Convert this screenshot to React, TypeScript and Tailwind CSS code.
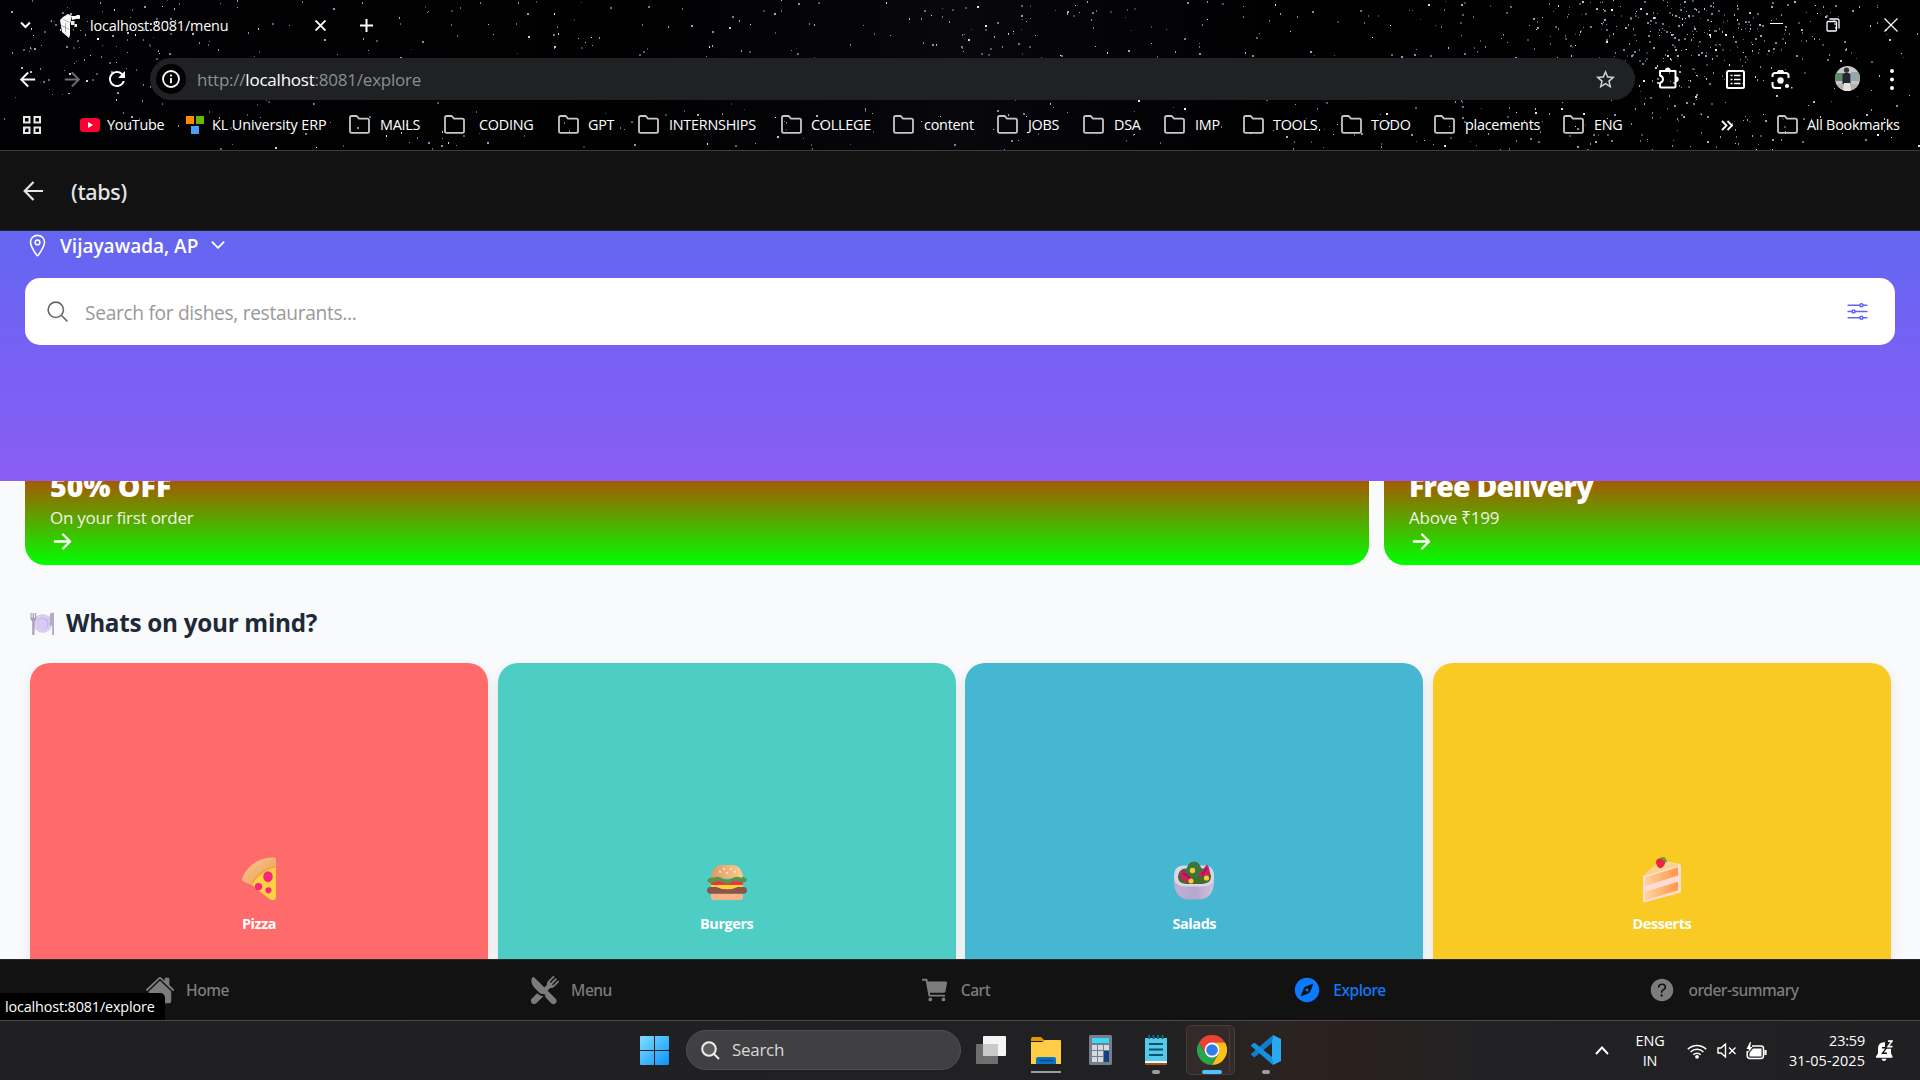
import React from "react";
import {
  IoArrowForward,
  IoCart,
  IoChevronDown,
  IoCompass,
  IoHelpCircle,
  IoHome,
  IoLocationOutline,
  IoOptionsOutline,
  IoRestaurant,
  IoSearchOutline,
} from "react-icons/io5";
import { MdArrowBack, MdArrowForward, MdRefresh, MdOutlineStarBorder } from "react-icons/md";

/* ---------- Star field behind the browser chrome ---------- */

function makeStars() {
  let s = 1234567;
  const rnd = () => {
    s = (s + 0x6d2b79f5) | 0;
    let t = Math.imul(s ^ (s >>> 15), 1 | s);
    t = (t + Math.imul(t ^ (t >>> 7), 61 | t)) ^ t;
    return ((t ^ (t >>> 14)) >>> 0) / 4294967296;
  };
  const gauss = () => (rnd() + rnd() + rnd() + rnd() - 2) / 2;
  const out: { x: number; y: number; w: number; h: number; c: string; o: number }[] = [];
  const colors = ["#8aa8dd", "#a9c4ee", "#dfe8f5", "#ffffff", "#7f99cf"];
  const add = (x: number, y: number) => {
    const big = rnd() > 0.68;
    out.push({
      x: Math.round(x),
      y: Math.round(y),
      w: big ? 2 : 1,
      h: big || rnd() > 0.5 ? 2 : 1,
      c: colors[Math.floor(rnd() * colors.length)],
      o: 0.35 + rnd() * 0.65,
    });
  };
  for (let i = 0; i < 620; i++) add(rnd() * 1920, rnd() * 150);
  for (let i = 0; i < 260; i++) add(1690 + gauss() * 260, 30 + gauss() * 90);
  for (let i = 0; i < 200; i++) add(1610 + gauss() * 420, rnd() * 150);
  for (let i = 0; i < 70; i++) add(120 + gauss() * 160, 40 + gauss() * 90);
  for (let i = 0; i < 50; i++) add(990 + gauss() * 130, 45 + gauss() * 80);
  return out;
}
const stars = makeStars();

function StarField() {
  return (
    <svg className="absolute inset-0 h-[150px] w-[1920px]" viewBox="0 0 1920 150" shapeRendering="crispEdges">
      {stars.map((p, i) => (
        <rect key={i} x={p.x} y={p.y} width={p.w} height={p.h} fill={p.c} opacity={p.o} />
      ))}
    </svg>
  );
}

/* ---------- Browser icons ---------- */

function Folder() {
  return (
    <svg className="h-[19px] w-[21px] shrink-0" viewBox="0 0 21 19" fill="none" stroke="#c7c7c7" strokeWidth="1.8">
      <path d="M1 2.6Q1 1 2.6 1H7.6L10 3.6H18.4Q20 3.6 20 5.2V16.2Q20 17.8 18.4 17.8H2.6Q1 17.8 1 16.2Z" />
    </svg>
  );
}

function CubeIcon() {
  return (
    <svg className="h-[25px] w-[21px]" viewBox="0 0 21 25">
      <path d="M0 7 3 4 8 1l4 2-1 4-1 4v11l-1 3-7-6Z" fill="#fafafa" />
      <path d="M1 12l8 4.500M3 6l6 3.500M5.500 10v9" stroke="#666" strokeWidth=".5" />
      <path d="M12 3h4v3l-4 1Z" fill="#fff" />
      <rect x="16" y="2" width="4" height="4" rx="1" fill="#fff" />
      <rect x="11" y="8" width="3.500" height="4" fill="#eee" />
      <rect x="14.500" y="11" width="2.500" height="3" fill="#eee" />
    </svg>
  );
}

function Puzzle() {
  return (
    <svg className="h-[26px] w-[22px]" viewBox="0 0 22 26" fill="none">
      <path
        d="M2 6H17.500V21.500Q17.500 22.500 16.500 22.500H3Q2 22.500 2 21.500V18Q5 17 5 14.200Q5 11.400 2 10.500V6Z"
        stroke="#fff"
        strokeWidth="2"
        strokeLinejoin="round"
      />
      <path d="M7 5.500a2.800 3 0 0 1 5.600 0ZM18 11.400a2.800 2.800 0 0 1 0 5.600Z" fill="#fff" />
    </svg>
  );
}

function ListIcon() {
  return (
    <svg className="h-[19px] w-[19px]" viewBox="0 0 19 19" fill="none" stroke="#fff">
      <rect x="1" y="1" width="17" height="17" rx="1.500" strokeWidth="2" />
      <path d="M4.500 5.500h2M4.500 9.500h2M4.500 13.500h2M8 5.500h6.500M8 9.500h6.500M8 13.500h6.500" strokeWidth="1.700" />
    </svg>
  );
}

function LensIcon() {
  return (
    <svg className="h-[22px] w-[22px]" viewBox="0 0 22 22" fill="none" stroke="#fff" strokeWidth="2">
      <path d="M1.500 9V7.500Q1.500 5 4 5H15Q17.500 5 17.500 7.500V10M1.500 14V17Q1.500 20 4.500 20H10" />
      <path d="M5.500 4.500 7.200 2H11.800L13.500 4.500Z" fill="#fff" stroke="none" />
      <circle cx="9.500" cy="12.500" r="3.200" fill="#fff" stroke="none" />
      <circle cx="16" cy="18" r="2.100" fill="#fff" stroke="none" />
      <rect x="20" y="19" width="1.500" height="1.500" fill="#ccc" stroke="none" />
    </svg>
  );
}

function Avatar() {
  return (
    <svg className="h-[25px] w-[25px]" viewBox="0 0 25 25">
      <clipPath id="av">
        <circle cx="12.500" cy="12.500" r="12.500" />
      </clipPath>
      <g clipPath="url(#av)">
        <rect width="25" height="25" fill="#c3c8c9" />
        <rect y="7" width="8" height="8" fill="#5d8a67" />
        <rect x="16" y="6" width="9" height="9" fill="#98a5aa" />
        <rect y="18" width="25" height="7" fill="#b9b3ac" />
        <circle cx="11.500" cy="4" r="2.600" fill="#3c302c" />
        <path d="M7.500 8q4-3 8 0v10h-8Z" fill="#22262f" />
        <path d="M9 17h6l1 8H8Z" fill="#e4e2df" />
      </g>
    </svg>
  );
}

/* ---------- Browser chrome ---------- */

function TabStrip() {
  return (
    <div className="flex h-[50px] items-center">
      <svg className="ml-[20px] h-[8px] w-[11px]" viewBox="0 0 11 8" fill="none" stroke="#fff" strokeWidth="2">
        <path d="M1 1.500 5.500 6 10 1.500" />
      </svg>
      <div className="ml-[29px]">
        <CubeIcon />
      </div>
      <span className="mt-[1px] ml-[9px] w-[225px] text-[14.4px] tracking-[-0.15px] text-white">localhost:8081/menu</span>
      <svg className="h-[11px] w-[11px]" viewBox="0 0 11 11" stroke="#fff" strokeWidth="1.900">
        <path d="M.5.5l10 10M10.500.5l-10 10" />
      </svg>
      <svg className="ml-[34px] h-[13px] w-[13px]" viewBox="0 0 13 13" stroke="#fff" strokeWidth="2">
        <path d="M6.500 0v13M0 6.500h13" />
      </svg>
      <svg className="mb-[2px] ml-auto h-[2px] w-[13px]" viewBox="0 0 13 2">
        <rect width="13" height="1" fill="#fff" />
      </svg>
      <svg className="ml-[43px] h-[14px] w-[14px]" viewBox="0 0 14 14" fill="none" stroke="#fff">
        <rect x="1" y="3.500" width="9.500" height="9.500" rx="1" strokeWidth="1.300" />
        <path d="M3.500 1h8q1.500 0 1.500 1.500v8" strokeWidth="1.300" />
      </svg>
      <svg className="mr-[22px] ml-[44px] h-[14px] w-[14px]" viewBox="0 0 14 14" stroke="#fff" strokeWidth="1.200">
        <path d="M.5.5l13 13M13.500.5l-13 13" />
      </svg>
    </div>
  );
}

function Toolbar() {
  return (
    <div className="flex h-[58px] items-center">
      <MdArrowBack className="ml-[16px] h-[23px] w-[23px] text-white" />
      <MdArrowForward className="ml-[22px] h-[23px] w-[23px] text-[#6e6e6e]" />
      <MdRefresh className="mb-[1px] ml-[21px] h-[24px] w-[24px] text-white" />
      <div className="ml-[21px] flex h-[42px] w-[1485px] items-center rounded-full bg-[#202124]">
        <div className="ml-[6px] flex h-[30px] w-[30px] items-center justify-center rounded-full bg-black">
          <svg className="h-[18px] w-[18px]" viewBox="0 0 18 18" fill="none" stroke="#fff" strokeWidth="1.800">
            <circle cx="9" cy="9" r="8" />
            <path d="M9 8v5.200M9 4.500v2" />
          </svg>
        </div>
        <span className="mt-[1px] ml-[11px] text-[17px] tracking-[-0.22px] whitespace-nowrap text-[#8b8e93]">
          http://<span className="text-white">localhost</span>:8081/explore
        </span>
        <MdOutlineStarBorder className="mr-[18px] ml-auto h-[23px] w-[23px] text-[#d0d0d0]" />
      </div>
      <div className="mb-[2px] ml-[23px]">
        <Puzzle />
      </div>
      <div className="ml-[46px]">
        <ListIcon />
      </div>
      <div className="mb-[1px] ml-[26px]">
        <LensIcon />
      </div>
      <div className="mb-[1px] ml-[42px]">
        <Avatar />
      </div>
      <svg className="ml-[30px] h-[21px] w-[4px]" viewBox="0 0 4 21" fill="#fff">
        <circle cx="2" cy="2" r="2" />
        <circle cx="2" cy="10.500" r="2" />
        <circle cx="2" cy="19" r="2" />
      </svg>
    </div>
  );
}

const folders = [
  { t: "MAILS", w: "w-[95px]", g: "ml-[10px]" },
  { t: "CODING", w: "w-[114px]", g: "ml-[14px]" },
  { t: "GPT", w: "w-[80px]", g: "ml-[9px]" },
  { t: "INTERNSHIPS", w: "w-[143px]", g: "ml-[10px]" },
  { t: "COLLEGE", w: "w-[112px]", g: "ml-[9px]" },
  { t: "content", w: "w-[104px]", g: "ml-[10px]" },
  { t: "JOBS", w: "w-[86px]", g: "ml-[10px]" },
  { t: "DSA", w: "w-[81px]", g: "ml-[10px]" },
  { t: "IMP", w: "w-[79px]", g: "ml-[10px]" },
  { t: "TOOLS", w: "w-[98px]", g: "ml-[9px]" },
  { t: "TODO", w: "w-[93px]", g: "ml-[9px]" },
  { t: "placements", w: "w-[129px]", g: "ml-[10px]" },
  { t: "ENG", w: "w-[158px]", g: "ml-[10px]" },
];

function Bookmarks() {
  return (
    <div className="flex h-[34px] items-center text-[14.4px] tracking-[-0.25px] whitespace-nowrap text-white">
      <svg className="ml-[23px] h-[18px] w-[18px] shrink-0" viewBox="0 0 18 18" fill="none" stroke="#e8e8e8" strokeWidth="2">
        <rect x="1" y="1" width="5.500" height="5.500" />
        <rect x="11.500" y="1" width="5.500" height="5.500" />
        <rect x="1" y="11.500" width="5.500" height="5.500" />
        <rect x="11.500" y="11.500" width="5.500" height="5.500" />
      </svg>
      <svg className="ml-[39px] h-[14px] w-[20px] shrink-0" viewBox="0 0 20 14">
        <rect width="20" height="14" rx="3.500" fill="#f03" />
        <path d="M8 4v6l5-3Z" fill="#fff" />
      </svg>
      <span className="ml-[7px] w-[79px]">YouTube</span>
      <svg className="h-[18px] w-[18px] shrink-0" viewBox="0 0 18 18">
        <rect width="8" height="8" fill="#ff8c00" />
        <rect x="10" width="8" height="8" fill="#6bb700" />
        <rect x="5" y="10" width="8" height="8" fill="#4a9df8" />
      </svg>
      <span className="ml-[8px] w-[137px] tracking-[-0.1px]">KL University ERP</span>
      {folders.map((f) => (
        <div key={f.t} className={`flex shrink-0 items-center ${f.w}`}>
          <Folder />
          <span className={f.g}>{f.t}</span>
        </div>
      ))}
      <svg className="h-[11px] w-[12px] shrink-0" viewBox="0 0 12 11" fill="none" stroke="#fff" strokeWidth="1.800">
        <path d="M1 1l4.500 4.500L1 10M6.500 1 11 5.500 6.500 10" />
      </svg>
      <div className="ml-[44px] flex items-center">
        <Folder />
        <span className="ml-[9px]">All Bookmarks</span>
      </div>
    </div>
  );
}

/* ---------- Food pictures ---------- */

function Pizza() {
  return (
    <svg className="h-[46px] w-[36px]" viewBox="0 0 38 48">
      <defs>
        <linearGradient id="crust" x1="0" y1="0" x2="1" y2="1">
          <stop offset="0" stopColor="#ffc98b" />
          <stop offset="1" stopColor="#e89a5e" />
        </linearGradient>
      </defs>
      <path d="M6 26 37 8V42Q37 48 31 46Z" fill="#ffd03f" />
      <path d="M34 1Q37 1 37 4V11Q20 13 10 30L3 27Q0 25 2 21Q12 2 34 1Z" fill="url(#crust)" />
      <path d="M36 11Q21 14 11 29" stroke="#f0a23c" strokeWidth="1.500" fill="none" />
      <ellipse cx="28.500" cy="21.500" rx="5" ry="5.800" fill="#f5277e" />
      <circle cx="18.500" cy="32" r="3.900" fill="#f5277e" />
      <circle cx="29" cy="36" r="3.200" fill="#f5277e" />
    </svg>
  );
}

function Burger() {
  return (
    <svg className="mt-[7px] h-[37px] w-[40px]" viewBox="0 0 40 38" preserveAspectRatio="none">
      <defs>
        <linearGradient id="bun" x1="0" y1="0" x2="1" y2="0">
          <stop offset="0" stopColor="#d99a62" />
          <stop offset="1" stopColor="#ffcb94" />
        </linearGradient>
      </defs>
      <path d="M4 30H36V34Q36 37 33 37H7Q4 37 4 34Z" fill="#fbb488" />
      <path d="M4 15Q5 1 15 1H25Q35 1 36 15Z" fill="url(#bun)" />
      <path d="M4 17H36V23H4Z" fill="#ec2f55" />
      <path d="M4 21.500H36V26H4Z" fill="#ffd22e" />
      <rect y="23.500" width="40" height="7" rx="3.500" fill="#875650" />
      <path d="M8 23Q20 29 32 23Z" fill="#ffd22e" />
      <path d="M0 17Q2 13 7 14Q11 12 14 14Q20 18 26 14Q30 12 34 14Q38 12 40 16Q39 21 32 18Q27 16 24 19Q20 22 16 19Q12 16 7 19Q2 21 0 17Z" fill="#559746" />
      <g fill="#fff3dc">
        <circle cx="13" cy="8" r="1" />
        <circle cx="17" cy="5" r="1" />
        <circle cx="20" cy="9" r="1" />
        <circle cx="24" cy="5" r="1" />
        <circle cx="28" cy="8" r="1" />
      </g>
    </svg>
  );
}

function Salad() {
  return (
    <svg className="mt-[3px] h-[45px] w-[40px]" viewBox="0 0 40 40">
      <defs>
        <linearGradient id="bowl" x1="0" y1="0" x2="1" y2="0">
          <stop offset="0" stopColor="#bdb3cd" />
          <stop offset=".55" stopColor="#b7a6cf" />
          <stop offset="1" stopColor="#cfc4dd" />
        </linearGradient>
      </defs>
      <path d="M0 15H40V22Q39 39 24 39H16Q1 39 0 22Z" fill="url(#bowl)" />
      <path d="M0 16Q0 5 10 5H30Q40 5 40 16Q40 26 28 26H12Q0 26 0 16Z" fill="#dcd5e6" />
      <path d="M4 16Q5 8 12 8H29Q37 9 37 16Q37 23 28 23.500H12Q4 23 4 16Z" fill="#436c2b" />
      <path d="M12 12Q13 1 20 1Q27 1 28 12Q27 17 20 16Q13 17 12 12Z" fill="#39753f" />
      <path d="M6 11Q14 10 19 20Q12 23 8 19Q5 15 6 11Z" fill="#ce1e64" />
      <path d="M33 4Q37 9 35 15Q30 17 24 15Z" fill="#ce1e64" />
      <path d="M9 13q5 1 7 6M33 8l-5 6" stroke="#8b1748" strokeWidth="1.500" fill="none" />
      <circle cx="18.500" cy="10" r="2.700" fill="#ffc82e" />
      <circle cx="32.500" cy="17.500" r="2.600" fill="#ffc82e" />
      <circle cx="17" cy="20.500" r="2.500" fill="#ffc82e" />
    </svg>
  );
}

function Cake() {
  return (
    <svg className="h-[47px] w-[40px]" viewBox="0 0 40 42" preserveAspectRatio="none">
      <defs>
        <linearGradient id="sponge" x1="0" y1="0" x2="1" y2="0">
          <stop offset="0" stopColor="#ffd3a0" />
          <stop offset="1" stopColor="#ff9846" />
        </linearGradient>
      </defs>
      <path d="M1 18 18 4 37 7Q39 7.500 39 9V31Q39 32.500 37 33L2 41.500Q1 41.500 1 40Z" fill="#ffdcd5" />
      <path d="M1 18 18 4 38 8Z" fill="#fbd28d" />
      <path d="M3 19 36 10V17.500L3 27Z" fill="url(#sponge)" />
      <path d="M3 32 36 23V30.500L3 39.500Z" fill="url(#sponge)" />
      <path d="M14 6Q14 2 19 2Q24 3 23 7Q21 11 18 11Q15 10 14 6Z" fill="#e8243f" />
      <path d="M18 1.500Q24-1 25 6Q22 5 18 1.500Z" fill="#5f9d35" />
    </svg>
  );
}

function Plate() {
  return (
    <svg className="mt-[2px] h-[24px] w-[25px]" viewBox="0 0 25 25">
      <circle cx="12.800" cy="12" r="9.600" fill="#cdbde8" />
      <circle cx="12.800" cy="12" r="9" fill="#dccff3" />
      <circle cx="12.800" cy="12" r="6.200" fill="#c6b4e4" />
      <circle cx="12" cy="12.500" r="5.400" fill="#d8cbf1" />
      <path d="M0 1h1.200v5h1V1h1.500v5h1V1H6v6q0 2-1.800 2.500V24H1.800V9.500Q0 9 0 7Z" fill="#aaa0ba" />
      <path d="M20 4q0-3 2.500-3.500L24.500 1V24H22.500V14H20Z" fill="#b5abc4" />
    </svg>
  );
}

/* ---------- Page ---------- */

const foods = [
  { name: "Pizza", icon: <Pizza />, bg: "bg-[#ff6b6b]" },
  { name: "Burgers", icon: <Burger />, bg: "bg-[#4ecdc4]" },
  { name: "Salads", icon: <Salad />, bg: "bg-[#45b7d1]" },
  { name: "Desserts", icon: <Cake />, bg: "bg-[#f9ca24]" },
];

function Promo({ title, sub, tracking }: { title: string; sub: string; tracking: string }) {
  return (
    <div className="flex h-[130px] w-[1344px] shrink-0 flex-col rounded-[20px] bg-[linear-gradient(180deg,#ff0000,#00ff00)] px-[25px] pt-[30px] text-white">
      <div className={`text-[28.5px] leading-[42px] font-extrabold ${tracking}`}>{title}</div>
      <div className="text-[17px] leading-[22px] tracking-[-0.25px] opacity-90">{sub}</div>
      <IoArrowForward className="h-[25px] w-[25px] stroke-[8]" />
    </div>
  );
}

function Page() {
  return (
    <div className="flex h-[728px] flex-col overflow-hidden bg-[#f9fafb]">
      <div className="relative z-10 h-[250px] shrink-0 bg-[linear-gradient(180deg,#6366f1,#8b5cf6)] px-[25px]">
        <div className="flex h-[30px] items-center text-white">
          <IoLocationOutline className="mb-[2px] h-[25px] w-[25px] stroke-[8]" />
          <span className="ml-[10px] text-[19px] font-semibold">Vijayawada, AP</span>
          <IoChevronDown className="mb-[2px] ml-[10px] h-[20px] w-[20px] stroke-[8]" />
        </div>
        <div className="mt-[17px] flex h-[67px] items-center rounded-[15px] bg-white px-[20px]">
          <IoSearchOutline className="h-[25px] w-[25px] text-[#666666]" />
          <span className="mt-[4px] ml-[15px] text-[19.2px] tracking-[-0.33px] text-[#999999]">
            Search for dishes, restaurants...
          </span>
          <IoOptionsOutline className="mr-[5px] ml-auto h-[25px] w-[25px] text-[#6366f1]" />
        </div>
      </div>
      <div className="-mt-[46px] flex shrink-0 gap-[15px] px-[25px]">
        <Promo title="50% OFF" sub="On your first order" tracking="tracking-[0px]" />
        <Promo title="Free Delivery" sub="Above ₹199" tracking="tracking-[-0.8px]" />
      </div>
      <div className="mt-[40px] flex h-[36px] shrink-0 items-center px-[30px]">
        <Plate />
        <h2 className="ml-[11px] text-[24.3px] font-bold tracking-[-0.3px] text-[#1f2937]">Whats on your mind?</h2>
      </div>
      <div className="mt-[22px] grid shrink-0 grid-cols-4 gap-[9.500px] pr-[29px] pl-[30px]">
        {foods.map((f) => (
          <div
            key={f.name}
            className={`flex h-[458px] flex-col items-center rounded-[20px] pt-[191px] shadow-[0_5px_12px_rgba(0,0,0,0.1)] ${f.bg}`}
          >
            <div className="flex h-[50px] items-center justify-center">{f.icon}</div>
            <span className="mt-[9px] text-[14.400px] leading-[22px] font-bold tracking-[-0.4px] text-white">{f.name}</span>
          </div>
        ))}
      </div>
    </div>
  );
}

const navItems = [
  { t: "Home", Icon: IoHome, c: "text-[#7c7c7d]" },
  { t: "Menu", Icon: IoRestaurant, c: "text-[#7c7c7d]" },
  { t: "Cart", Icon: IoCart, c: "text-[#7c7c7d]" },
  { t: "Explore", Icon: IoCompass, c: "text-[#0a7aff]" },
  { t: "order-summary", Icon: IoHelpCircle, c: "text-[#7c7c7d]" },
];

function BottomNav() {
  return (
    <div className="relative grid h-[61px] grid-cols-5 border-t border-[#272729] bg-[#121212]">
      {navItems.map(({ t, Icon, c }) => (
        <div key={t} className={`flex items-center justify-center gap-[11px] pr-[10px] ${c}`}>
          <Icon className="h-[30px] w-[30px]" />
          <span className="mt-[2px] font-['Noto_Sans'] text-[15.600px] font-medium tracking-[-0.5px]">{t}</span>
        </div>
      ))}
      <div className="absolute bottom-0 left-0 flex h-[27px] w-[165px] items-center rounded-tr-[5px] bg-black pl-[5px] text-[14.400px] tracking-[-0.15px] text-white">
        localhost:8081/explore
      </div>
    </div>
  );
}

/* ---------- Taskbar ---------- */

function Taskbar() {
  return (
    <div className="flex h-[60px] items-center border-t border-[#48484a] bg-[linear-gradient(90deg,#202022_0%,#212123_60%,#2b2320_67%,#2b201e_70%,#222224_77%,#202022_100%)] text-white">
      <svg className="ml-[640px] h-[29px] w-[29px] shrink-0" viewBox="0 0 29 29">
        <defs>
          <linearGradient id="win" x1="0" y1="0" x2="1" y2="1">
            <stop offset="0" stopColor="#7fe0ff" />
            <stop offset="1" stopColor="#0a93fb" />
          </linearGradient>
        </defs>
        <path d="M1 0H14V14H0V1Q0 0 1 0ZM15 0H28Q29 0 29 1V14H15ZM0 15H14V29H1Q0 29 0 28ZM15 15H29V28Q29 29 28 29H15Z" fill="url(#win)" />
      </svg>
      <div className="mb-[1px] ml-[17px] flex h-[40px] w-[275px] shrink-0 items-center rounded-full border border-[#505052] bg-[#404042]">
        <svg className="ml-[14px] h-[19px] w-[19px]" viewBox="0 0 19 19" fill="#5c5c5e" stroke="#f0f0f0" strokeWidth="2">
          <circle cx="8" cy="8" r="6.800" />
          <path d="M13 13l5 5" />
        </svg>
        <span className="ml-[12px] text-[17px] tracking-[-0.3px] text-[#d8d8d8]">Search</span>
      </div>
      <svg className="mb-[1px] ml-[15px] h-[30px] w-[30px] shrink-0" viewBox="0 0 30 30">
        <rect x="7" y="1" width="23" height="20" rx="1" fill="#f4f4f4" />
        <rect x="0" y="9" width="22" height="20" rx="1" fill="#8a8a8a" opacity=".75" />
        <rect x="7" y="9" width="15" height="12" fill="#c9c9c9" />
      </svg>
      <div className="ml-[25px] flex h-[50px] w-[30px] shrink-0 flex-col items-center justify-end">
        <svg className="h-[28px] w-[30px]" viewBox="0 0 30 28">
          <path d="M0 2Q0 0 2 0H10L14 4H0Z" fill="#e09a00" />
          <path d="M0 5H11L14 3H29Q30 3 30 4V27H0Z" fill="#ffcd45" />
          <path d="M5 27V22Q5 20 7 20H23Q25 20 25 22V27Z" fill="#0e72c4" />
          <path d="M8 23.500h14" stroke="#0a4c8f" strokeWidth="1.500" />
        </svg>
        <div className="mt-[6px] mb-[3px] h-[2px] w-[30px] bg-[#9d9d9d]" />
      </div>
      <svg className="mb-[1px] ml-[28px] h-[30px] w-[23px] shrink-0" viewBox="0 0 23 30">
        <rect width="23" height="30" rx="1.500" fill="#76808c" />
        <rect x="3" y="3" width="17" height="5" fill="#3fd6f7" />
        <path d="M3 10h5v5H3zM9 10h5v5H9zM15 10h5v5h-5zM3 16h5v5H3zM9 16h5v5H9zM3 22h5v5H3zM9 22h5v5H9z" fill="#d3dae2" />
        <path d="M15 16h5v11h-5z" fill="#123f85" />
      </svg>
      <div className="ml-[33px] flex h-[50px] w-[22px] shrink-0 flex-col items-center justify-end">
        <svg className="h-[30px] w-[22px]" viewBox="0 0 22 30">
          <path d="M0 4H22V29Q22 30 21 30H1Q0 30 0 29Z" fill="#a8551c" />
          <path d="M0 4H22V28H0Z" fill="#f3f3f3" />
          <path d="M0 3H22V26H0Z" fill="#55c9ea" />
          <path d="M4 0v4M8.500 0v4M13 0v4M17.500 0v4" stroke="#0c6b87" strokeWidth="2" />
          <path d="M4 9h14M4 14.500h14M4 20h14" stroke="#07506b" strokeWidth="2" />
        </svg>
        <div className="mt-[5px] mb-[2px] h-[4px] w-[8px] rounded-full bg-[#9d9d9d]" />
      </div>
      <div className="mb-[1px] ml-[19px] flex h-[50px] w-[49px] shrink-0 rounded-[5px] border border-[#463d3b] bg-[#332a29]">
        <div className="flex w-[43px] flex-col items-end justify-end rounded-[5px] border-r border-[#463d3b]">
          <svg className="mr-[2px] h-[30px] w-[30px]" viewBox="0 0 30 30">
            <path d="M2 7.500A15 15 0 0 1 28 7.500H15L8.500 18.500Z" fill="#ea4335" />
            <path d="M28 7.500A15 15 0 0 1 15 30L21.500 18.500 15 7.500Z" fill="#fbc116" />
            <path d="M15 30A15 15 0 0 1 2 7.500L8.500 18.750H21.500Z" fill="#2ba24c" />
            <circle cx="15" cy="15" r="7.400" fill="#fff" />
            <circle cx="15" cy="15" r="5.800" fill="#2f7de9" />
          </svg>
          <div className="mt-[5px] mr-[7px] h-[4px] w-[20px] rounded-full bg-[#4cc2ff]" />
        </div>
      </div>
      <div className="ml-[16px] flex h-[50px] w-[30px] shrink-0 flex-col items-center justify-end">
        <svg className="h-[30px] w-[30px]" viewBox="0 0 30 30">
          <path d="M22 0 30 4V26L22 30 21 26V4Z" fill="#29a9f2" />
          <path d="M22 0 21 8 4 22 2.500 22 0 19.500V19Z" fill="#0f7fcb" />
          <path d="M22 30 21 22 4 8 2.500 8 0 10.500V11Z" fill="#1492df" />
        </svg>
        <div className="mt-[5px] mb-[2px] h-[4px] w-[8px] rounded-full bg-[#9d9d9d]" />
      </div>
      <svg className="ml-auto h-[9px] w-[14px] shrink-0" viewBox="0 0 14 9" fill="none" stroke="#fff" strokeWidth="1.900">
        <path d="M1 8 7 1.500 13 8" />
      </svg>
      <div className="ml-[24px] flex w-[34px] flex-col items-center text-[14.400px] leading-[20px] tracking-[-0.1px]">
        <span>ENG</span>
        <span>IN</span>
      </div>
      <svg className="ml-[20px] h-[16px] w-[20px] shrink-0" viewBox="0 0 20 16" fill="none" stroke="#fff" strokeWidth="1.500">
        <path d="M.8 6.200a13 13 0 0 1 18.400 0M3.600 9a9 9 0 0 1 12.800 0M6.300 11.700a5.200 5.200 0 0 1 7.400 0" />
        <circle cx="10" cy="13.800" r="1.900" fill="#fff" stroke="none" />
      </svg>
      <svg className="ml-[10px] h-[15px] w-[20px] shrink-0" viewBox="0 0 20 15" fill="none" stroke="#fff" strokeWidth="1.400">
        <path d="M1 5H4L8.500 1V14L4 10H1ZM12 4.500l6.500 6.500M18.500 4.500 12 11" />
      </svg>
      <svg className="ml-[9px] h-[18px] w-[21px] shrink-0" viewBox="0 0 21 18" fill="none" stroke="#fff" strokeWidth="1.500">
        <path d="M6 4H15Q17.500 4 17.500 6.500V13.500Q17.500 16.500 15 16.500H4Q1.200 16.500 1.200 13.500V9" />
        <path d="M7 6.500H15.500V14.500H3.500V11Z" fill="#fff" stroke="none" />
        <path d="M4 0 .5 7H3L2 11 6.500 5H4.200L5 0Z" fill="#fff" stroke="none" />
        <path d="M19.500 8v5" strokeWidth="2.200" />
      </svg>
      <div className="ml-[11px] flex w-[87px] flex-col items-end text-[14.400px] leading-[20px] tracking-[0.1px] whitespace-nowrap">
        <span className="tracking-[-0.15px]">23:59</span>
        <span>31-05-2025</span>
      </div>
      <svg className="mr-[27px] ml-[11px] h-[21px] w-[17px] shrink-0" viewBox="0 0 17 19" fill="#fff" preserveAspectRatio="none">
        <path d="M2 8Q2 2 8 2H9V8H15V12L16.500 15V16H0V15L2 12ZM5.500 17H10.500Q10 19 8 19Q6 19 5.500 17Z" />
        <path d="M11.500 1h4.500l-4 5h4.500" fill="none" stroke="#222" strokeWidth="2.400" />
        <path d="M6 7h4.500l-4 5h4.500" fill="none" stroke="#111" strokeWidth="1.300" />
        <path d="M12 1h4l-4 5h4.500" fill="none" stroke="#fff" strokeWidth="1.400" />
      </svg>
    </div>
  );
}

export default function App() {
  return (
    <div className="flex h-[1080px] w-[1920px] flex-col overflow-hidden bg-black font-['Open_Sans','Noto_Sans',sans-serif]">
      <div className="relative h-[151px] shrink-0 border-b border-[#3c3c3c] bg-[linear-gradient(90deg,#020204_0%,#010102_33%,#07070c_50%,#010102_66%,#000_100%)]">
        <StarField />
        <div className="relative">
          <TabStrip />
          <Toolbar />
          <Bookmarks />
        </div>
      </div>
      <div className="flex h-[80px] shrink-0 items-center border-b border-[#272729] bg-[#121212]">
        <svg className="ml-[23px] h-[20px] w-[20px]" viewBox="0 0 20 20" fill="none" stroke="#e5e5e7" strokeWidth="2.200">
          <path d="M20 10H2M10.500 1 1.700 10l8.800 9" />
        </svg>
        <span className="mt-[3px] ml-[28px] font-['Noto_Sans'] text-[21.500px] font-medium tracking-[-0.3px] text-[#e5e5e7]">
          (tabs)
        </span>
      </div>
      <Page />
      <BottomNav />
      <Taskbar />
    </div>
  );
}
